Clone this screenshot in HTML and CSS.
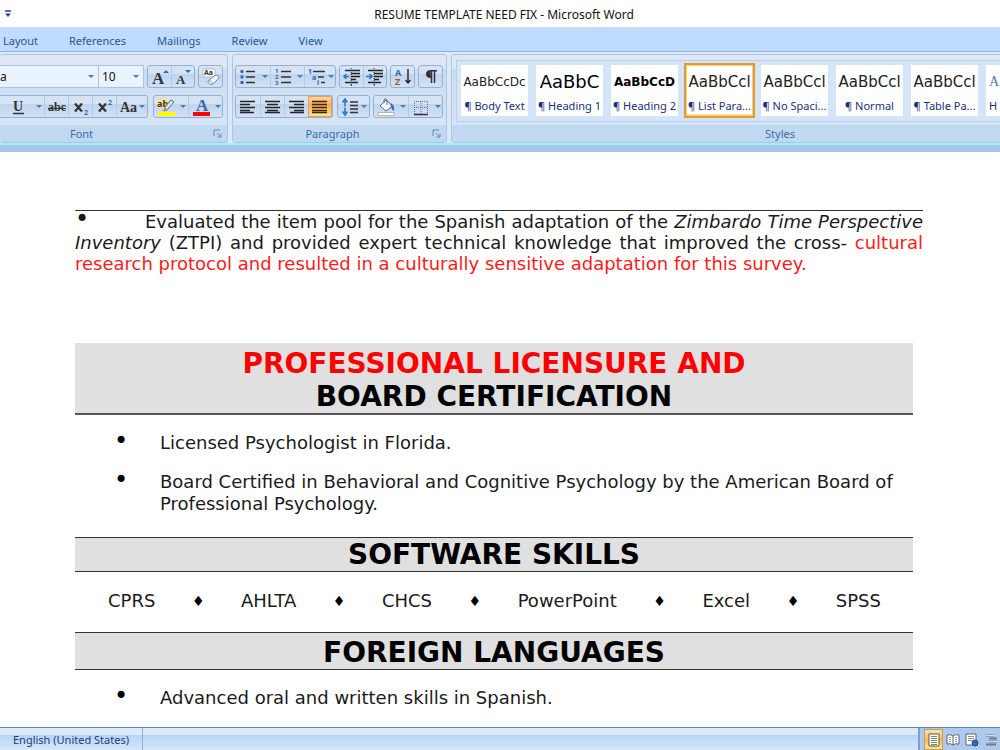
FILE: index.html
```html
<!DOCTYPE html>
<html lang="en">
<head>
<meta charset="utf-8">
<meta name="viewport" content="width=device-width, initial-scale=1">
<title>RESUME TEMPLATE NEED FIX - Microsoft Word</title>
<link rel="stylesheet" href="styles.css">
</head>
<body>

<header class="titlebar">
  <button class="quick" aria-label="Customize Quick Access Toolbar">
    <svg width="8" height="8" viewBox="0 0 8 8"><path d="M1 1h6" stroke="#27408b" stroke-width="1.5"/><path d="M1 3.5h6L4 7z" fill="#27408b"/></svg>
  </button>
  <div class="title">RESUME TEMPLATE NEED FIX - Microsoft Word</div>
</header>

<nav class="tabs">
  <a href="#">Layout</a>
  <a href="#">References</a>
  <a href="#">Mailings</a>
  <a href="#">Review</a>
  <a href="#">View</a>
</nav>

<div class="ribbon">
  <section class="group font-group">
    <div class="tools">
      <div class="tool-row">
        <div class="combos">
          <select class="font-name" aria-label="Font"><option>a</option></select>
          <select class="font-size" aria-label="Font size"><option>10</option></select>
        </div>
        <div class="set">
          <button aria-label="Grow font"><svg width="20" height="20" viewBox="0 0 20 20"><text x="2" y="17" class="serif" font-size="17">A</text><path d="M13 6l3-3 3 3z" fill="#3567ad"/></svg></button>
          <button aria-label="Shrink font"><svg width="20" height="20" viewBox="0 0 20 20"><text x="3" y="17" class="serif" font-size="13">A</text><path d="M12 3h6l-3 3z" fill="#3567ad"/></svg></button>
        </div>
        <div class="set">
          <button aria-label="Clear formatting"><svg width="20" height="20" viewBox="0 0 20 20"><path d="M2 2h12v8H2z" fill="#fff" stroke="#b5bdc9"/><text x="3" y="8" font-size="7" font-weight="bold" fill="#333">Aa</text><path d="M7 14l6-5q5-2 5 2l-6 6q-5 1-5-3z" fill="#f3f5fa" stroke="#75819b"/><path d="M7 14q4-1 5 3" fill="none" stroke="#9ba6bb"/></svg></button>
        </div>
      </div>
      <div class="tool-row">
        <div class="set open">
          <button class="split underline" aria-label="Underline"><svg width="18" height="20" viewBox="0 0 18 20"><text x="3" y="14" class="serif" font-size="14">U</text><path d="M3 16.5h11" stroke="#333" stroke-width="1.5"/></svg><i></i></button>
          <button class="wide" aria-label="Strikethrough"><svg width="20" height="20" viewBox="0 0 20 20"><text x="1" y="14" class="serif" font-size="12">abc</text><path d="M1 11.5h18" stroke="#333"/></svg></button>
          <button class="wide" aria-label="Subscript"><svg width="20" height="20" viewBox="0 0 20 20"><path d="M4 6.500l7 8M11 6.500l-7 8" stroke="#333" stroke-width="2.200"/><text x="13" y="18" font-size="7" font-weight="bold" fill="#2d70b8">2</text></svg></button>
          <button class="wide" aria-label="Superscript"><svg width="20" height="20" viewBox="0 0 20 20"><path d="M4 6.500l7 8M11 6.500l-7 8" stroke="#333" stroke-width="2.200"/><text x="13" y="8" font-size="7" font-weight="bold" fill="#2d70b8">2</text></svg></button>
          <button class="case" aria-label="Change case"><svg width="18" height="20" viewBox="0 0 18 20"><text x="0" y="15" class="serif" font-size="14">Aa</text></svg><i></i></button>
        </div>
        <div class="set">
          <button class="split" aria-label="Text highlight color"><svg width="20" height="20" viewBox="0 0 20 20"><path d="M1 2h11v9H1z" fill="#ffe680"/><text x="1" y="10" font-size="9" font-weight="bold" fill="#333">ab</text><path d="M9 10l6-7 3 2-7 8-3 1z" fill="#dce6f4" stroke="#596c8a"/><path d="M6 14l3-4 3 3z" fill="#d59b4b"/><path d="M2 15h17v4H2z" fill="#ff0"/></svg><i></i></button>
          <button class="split" aria-label="Font color"><svg width="20" height="20" viewBox="0 0 20 20"><text x="5" y="14" class="serif blue" font-size="17">A</text><path d="M2 15h17v4H2z" fill="red"/></svg><i></i></button>
        </div>
      </div>
    </div>
    <div class="group-name"><span>Font</span>
      <button class="launcher" aria-label="Font settings"><svg width="9" height="9" viewBox="0 0 9 9"><path d="M1 7V1h6M4 4l4 4M8 4.500V8H4.500" fill="none" stroke="#6287b8"/></svg></button>
    </div>
  </section>

  <section class="group">
    <div class="tools">
      <div class="tool-row">
        <div class="set">
          <button class="split" aria-label="Bullets"><svg width="20" height="20" viewBox="0 0 20 20"><g fill="#2f68ae"><circle cx="4" cy="4.500" r="1.700"/><circle cx="4" cy="10" r="1.700"/><circle cx="4" cy="15.500" r="1.700"/></g><path d="M8 4.500h9M8 10h9M8 15.500h9" stroke="#333" stroke-width="1.400"/></svg><i></i></button>
          <button class="split" aria-label="Numbering"><svg width="20" height="20" viewBox="0 0 20 20"><g fill="#2f68ae" font-size="6" font-weight="bold"><text x="2" y="6">1</text><text x="2" y="12">2</text><text x="2" y="18">3</text></g><path d="M8 4.500h10M8 10h10M8 15.500h10" stroke="#333" stroke-width="1.400"/></svg><i></i></button>
          <button class="multi" aria-label="Multilevel list"><svg width="20" height="20" viewBox="0 0 20 20"><g fill="#2f68ae" font-size="7" font-weight="bold"><text x="1" y="7">1</text><text x="5" y="13">a</text><text x="10" y="18">i</text></g><path d="M6 4.500h12M11 10h6M14 15.500h4" stroke="#333" stroke-width="1.400"/></svg><i></i></button>
        </div>
        <div class="set">
          <button aria-label="Decrease indent"><svg width="20" height="20" viewBox="0 0 20 20"><path d="M3 3.500h15M9 6.500h9M9 9.500h9M9 12.500h5M3 15.500h13M9 18h1" stroke="#222" stroke-width="1.500"/><path d="M9 1v18" stroke="#333" stroke-dasharray="1 1"/><path d="M7 9.500H2M4.500 7L2 9.500 4.500 12" fill="none" stroke="#2878c4" stroke-width="1.600"/></svg></button>
          <button aria-label="Increase indent"><svg width="20" height="20" viewBox="0 0 20 20"><path d="M3 3.500h15M9 6.500h9M9 9.500h9M9 12.500h5M3 15.500h13M9 18h1" stroke="#222" stroke-width="1.500"/><path d="M9 1v18" stroke="#333" stroke-dasharray="1 1"/><path d="M1 9.500h6M4.500 7L7 9.500 4.500 12" fill="none" stroke="#2878c4" stroke-width="1.600"/></svg></button>
        </div>
        <div class="set">
          <button aria-label="Sort"><svg width="20" height="20" viewBox="0 0 20 20"><text x="2" y="9" font-size="9" font-weight="bold" fill="#376aab">A</text><text x="2" y="18" font-size="9" font-weight="bold" fill="#a65b22">Z</text><path d="M15 2v14M12.500 13l2.500 3 2.500-3" fill="none" stroke="#222" stroke-width="1.400"/></svg></button>
        </div>
        <div class="set">
          <button aria-label="Show paragraph marks"><svg width="20" height="20" viewBox="0 0 20 20"><path d="M10 11Q5 11 5 7t5-4h6v1.500H9.500z" fill="#333"/><path d="M10.500 3v13M13.500 3v13" stroke="#333" stroke-width="1.500"/></svg></button>
        </div>
      </div>
      <div class="tool-row">
        <div class="set">
          <button class="wide" aria-label="Align left"><svg width="20" height="20" viewBox="0 0 20 20"><path d="M2 4.500h15M2 7.500h10M2 10.500h15M2 13.500h10M2 15.500h14" stroke="#222" stroke-width="1.400"/></svg></button>
          <button class="wide" aria-label="Center"><svg width="20" height="20" viewBox="0 0 20 20"><path d="M2 4.500h15M4 7.500h11M2 10.500h15M4 13.500h11M2 15.500h15" stroke="#222" stroke-width="1.400"/></svg></button>
          <button class="wide" aria-label="Align right"><svg width="20" height="20" viewBox="0 0 20 20"><path d="M2 4.500h15M7 7.500h10M2 10.500h15M7 13.500h10M3 15.500h14" stroke="#222" stroke-width="1.400"/></svg></button>
          <button class="wide on" aria-label="Justify" aria-pressed="true"><svg width="20" height="20" viewBox="0 0 20 20"><path d="M2 4.500h15M2 7.500h15M2 10.500h15M2 13.500h15M2 15.500h15" stroke="#3d2409" stroke-width="1.400"/></svg></button>
        </div>
        <div class="set">
          <button class="spacing" aria-label="Line spacing"><svg width="20" height="20" viewBox="0 0 20 20"><path d="M5 2v16M2.500 5.500L5 2l2.500 3.500M2.500 14.500L5 18l2.500-3.500" fill="none" stroke="#2f7fc5" stroke-width="1.700"/><path d="M4 9.500h2v1H4z" fill="#d7e5f6"/><path d="M10 5h8M10 8.500h8M10 12h8M10 15.500h8" stroke="#333" stroke-width="1.300"/></svg><i></i></button>
        </div>
        <div class="set">
          <button class="split" aria-label="Shading"><svg width="20" height="20" viewBox="0 0 20 20"><path d="M4 9l6-6 7 6-7 5z" fill="#f5f8fc" stroke="#50698e"/><path d="M8 6V3q1-3 3 0v5" fill="none" stroke="#50698e"/><path d="M14 6q5 1 4 8-2-1-3-4z" fill="#3a70b4"/><path d="M2 15.500h16v3H2z" fill="#fff" stroke="#b5b5a8"/></svg><i></i></button>
          <button class="split" aria-label="Borders"><svg width="20" height="20" viewBox="0 0 20 20"><path d="M3.500 17V4.500h13V17M10 4v13M3 10.500h14" fill="none" stroke="#65738a" stroke-dasharray="1 1"/><path d="M3 17.500h14" stroke="#333" stroke-width="1.500"/></svg><i></i></button>
        </div>
      </div>
    </div>
    <div class="group-name"><span>Paragraph</span>
      <button class="launcher" aria-label="Paragraph settings"><svg width="9" height="9" viewBox="0 0 9 9"><path d="M1 7V1h6M4 4l4 4M8 4.500V8H4.500" fill="none" stroke="#6287b8"/></svg></button>
    </div>
  </section>

  <section class="group styles-group">
    <div class="gallery">
      <button class="tile"><span class="sample small">AaBbCcDc</span><span>¶ Body Text</span></button>
      <button class="tile"><span class="sample large">AaBbC</span><span>¶ Heading 1</span></button>
      <button class="tile"><span class="sample strong">AaBbCcD</span><span>¶ Heading 2</span></button>
      <button class="tile selected"><span class="sample">AaBbCcl</span><span>¶ List Para...</span></button>
      <button class="tile"><span class="sample">AaBbCcl</span><span>¶ No Spaci...</span></button>
      <button class="tile"><span class="sample">AaBbCcl</span><span>¶ Normal</span></button>
      <button class="tile"><span class="sample">AaBbCcl</span><span>¶ Table Pa...</span></button>
      <button class="tile last"><span class="sample heading">A</span><span>H</span></button>
    </div>
    <div class="group-name"><span>Styles</span></div>
  </section>
</div>

<main class="document">
  <div class="intro">
    <span class="line"><span class="tab">•</span>Evaluated the item pool for the Spanish adaptation of the <em>Zimbardo Time Perspective</em></span>
    <span class="line"><em>Inventory</em> (ZTPI) and provided expert technical knowledge that improved the cross- <span class="red">cultural</span></span>
    <span class="line end red">research protocol and resulted in a culturally sensitive adaptation for this survey.</span>
  </div>

  <h2 class="licensure"><span class="red">PROFESSIONAL LICENSURE AND</span><br>BOARD CERTIFICATION</h2>
  <ul>
    <li>Licensed Psychologist in Florida.</li>
    <li>Board Certified in Behavioral and Cognitive Psychology by the American Board of Professional Psychology.</li>
  </ul>

  <h2 class="ruled software">SOFTWARE SKILLS</h2>
  <div class="skills">
    <span>CPRS</span><b>♦</b><span>AHLTA</span><b>♦</b><span>CHCS</span><b>♦</b><span>PowerPoint</span><b>♦</b><span>Excel</span><b>♦</b><span>SPSS</span>
  </div>

  <h2 class="ruled languages">FOREIGN LANGUAGES</h2>
  <ul>
    <li>Advanced oral and written skills in Spanish.</li>
  </ul>
</main>

<footer class="statusbar">
  <button class="language">English (United States)</button>
  <div class="views">
    <button class="on" aria-label="Print layout"><svg width="16" height="16" viewBox="0 0 16 16"><path d="M3 2h10v12H3z" fill="#fff" stroke="#5d564a"/><path d="M5 4.500h6M5 6.500h6M5 8.500h6M5 10.500h6M5 12.500h6" stroke="#8a806e"/></svg></button>
    <button aria-label="Full screen reading"><svg width="16" height="16" viewBox="0 0 16 16"><path d="M2 3q4-1 6 1 2-2 6-1v9q-4-1-6 1-2-2-6-1zM8 4v9" fill="#fff" stroke="#5c6470"/><path d="M4 5.500h2M4 7.500h2M4 9.500h2M10 5.500h2M10 7.500h2M10 9.500h2" stroke="#8a8f98"/></svg></button>
    <button aria-label="Web layout"><svg width="16" height="16" viewBox="0 0 16 16"><path d="M2 2h10v11H2z" fill="#fff" stroke="#5c6470"/><path d="M4 4.500h6M4 6.500h6M4 8.500h4" stroke="#8a8f98"/><circle cx="11" cy="11" r="3" fill="#2e69bd" stroke="#19468b"/></svg></button>
    <button aria-label="Outline"><svg width="16" height="16" viewBox="0 0 16 16"><path d="M3 3.500h8M6 6.500h8M6 9.500h8M3 12.500h10" stroke="#6f7b8d" stroke-width="2"/><path d="M3 3.500h8M6 9.500h8" stroke="#d5dce6"/></svg></button>
  </div>
</footer>

</body>
</html>
```
FILE: styles.css
```css
*, *:before, *:after {
  box-sizing: border-box;
}

body {
  margin: 0;
  min-height: 100vh;
  display: flex;
  flex-direction: column;
  overflow-x: hidden;
  background: #fff;
  font-family: "Noto Sans", sans-serif;
  font-size: 11px;
}

button, select {
  margin: 0;
  padding: 0;
  border: 0;
  background: none;
  font: inherit;
  color: inherit;
}

svg {
  display: block;
  flex: none;
}

svg text {
  font-family: "Noto Sans", sans-serif;
}

svg .serif {
  font-family: "Liberation Serif", serif;
  font-weight: bold;
  fill: #333;
}

svg .blue {
  fill: #3767ac;
}

.titlebar {
  display: flex;
  align-items: center;
  height: 27px;
  padding: 0 4px;
}

.title {
  flex: 1;
  padding-top: 2px;
  font-size: 12px;
  text-align: center;
  color: #111;
}

.tabs {
  display: flex;
  align-items: center;
  gap: 31px;
  height: 25px;
  padding: 2px 3px 0;
  border-bottom: 1px solid #8db2e3;
  background: #bfdbff;
}

.tabs a {
  color: #2b568f;
  text-decoration: none;
}

/* ribbon */
.ribbon {
  display: flex;
  gap: 4px;
  height: 100px;
  padding: 2px 0 8px;
  overflow: hidden;
  background: linear-gradient(#dce8f6 0 91px, #9ff0f6 91px 93px, #a9c6eb 93px);
}

.group {
  flex: none;
  display: flex;
  flex-direction: column;
  height: 89px;
  border: 1px solid #aac5e5;
  border-radius: 3px;
  background: linear-gradient(#dee8f5 0 14px, #cbdcf0 14px, #d8e8f8);
}

.font-group {
  border-left: 0;
}

.group-name {
  display: flex;
  align-items: center;
  height: 17px;
  background: #c1d8f1;
  color: #3e6aaa;
}

.group-name span {
  flex: 1;
  text-align: center;
}

.font-group .group-name span {
  padding-right: 50px;
}

.launcher {
  width: 9px;
  margin-right: 5px;
}

.tools {
  flex: 1;
  display: flex;
  flex-direction: column;
  gap: 7px;
  padding: 10px 3px 0 2px;
}

.font-group .tools {
  padding: 10px 4px 0 0;
}

.tool-row {
  display: flex;
  justify-content: space-between;
  gap: 3px;
}

.set {
  display: flex;
  height: 23px;
  border: 1px solid #93b1d8;
  border-radius: 3px;
  background: linear-gradient(#d5e3f4 0 40%, #bfd4ed 40%, #d2e2f5);
}

.set.open {
  border-left: 0;
  border-radius: 0 3px 3px 0;
}

.set button {
  display: flex;
  align-items: center;
  justify-content: center;
  width: 23px;
}

.set button + button {
  border-left: 1px solid #b4cae6;
}

.set .split {
  width: 34px;
}

.set .underline {
  width: 44px;
  padding-left: 8px;
}

.set .case, .set .multi, .set .spacing {
  width: 31px;
}

.set .wide {
  width: 24px;
}

.set i {
  margin-left: 4px;
  border: 3px solid transparent;
  border-top-color: #4c79b8;
  border-bottom: 0;
}

.set .underline i {
  margin-left: 8px;
}

.set .case i, .set .multi i, .set .spacing i {
  margin-left: 1px;
}

.set .on {
  border: 1px solid #d9a65c;
  background: linear-gradient(#fdd5a0, #f9ac4c 45%, #fde68c);
}

.combos {
  display: flex;
}

.combos select {
  height: 23px;
  border: 1px solid #a9c3e3;
  border-left: 0;
  background: url("data:image/svg+xml,%3Csvg xmlns='http://www.w3.org/2000/svg' width='6' height='4'%3E%3Cpath d='M0 0h6L3 3z' fill='%234c79b8'/%3E%3C/svg%3E") no-repeat right 4px center #eaf3fd;
  appearance: none;
  font-size: 12px;
  color: #111;
}

.font-name {
  width: 99px;
}

.font-size {
  width: 45px;
  padding-left: 3px;
}

/* styles gallery */
.gallery {
  flex: none;
  display: flex;
  gap: 8px;
  height: 62px;
  margin: 5px 4px 3px;
  padding: 4px 50px 4px 4px;
  border: 1px solid #b9d0ec;
  background: #d4e5f8;
}

.tile {
  flex: none;
  display: flex;
  flex-direction: column;
  justify-content: space-between;
  align-items: center;
  width: 67px;
  height: 51px;
  padding: 6px 0 3px;
  overflow: hidden;
  background: #fff;
  color: #172f7b;
  line-height: 15px;
  white-space: nowrap;
}

.tile.selected {
  outline: 2px solid #e09a3c;
  box-shadow: inset 0 0 0 1px #fbd070, inset 0 -2px #fce388;
}

.tile.last {
  align-items: flex-start;
  padding-left: 3px;
}

.sample {
  font-family: "DejaVu Sans", sans-serif;
  font-size: 15px;
  line-height: 22px;
  color: #222;
}

.sample.small {
  font-size: 12px;
}

.sample.large {
  font-size: 18px;
  color: #000;
}

.sample.strong {
  font-size: 12px;
  font-weight: bold;
  color: #000;
}

.sample.heading {
  font-family: "Liberation Serif", serif;
  font-size: 14px;
  color: #4779b8;
}

/* page */
.document {
  flex: 1;
  padding: 58px 87px 0 75px;
  font-family: "DejaVu Sans", sans-serif;
  font-size: 18px;
  line-height: 22px;
  color: #1a1a1a;
}

.intro {
  margin: 0 -10px 69px 0;
  border-top: 1px solid #333;
  line-height: 21px;
}

.line {
  display: block;
  text-align: justify;
  text-align-last: justify;
  white-space: nowrap;
}

.line.end {
  text-align-last: left;
}

.tab {
  display: inline-block;
  width: 70px;
  font-size: 24px;
  line-height: 16px;
  text-align-last: left;
  vertical-align: top;
}

.red {
  color: #ff1a1a;
}

h2 {
  margin: 0;
  background: #e0e0e0;
  border-bottom: 1px solid #333;
  font-size: 28px;
  line-height: 33px;
  text-align: center;
  color: #000;
}

h2 .red {
  color: #f00;
}

.licensure {
  padding: 4px 0 0;
  border-bottom-width: 2px;
  border-bottom-color: #555;
}

.ruled {
  border-top: 1px solid #333;
}

.languages {
  padding: 3px 0 0;
}

.document ul {
  margin: 0;
  padding: 17px 0 22px 85px;
  list-style: none;
}

.document ul:last-child {
  padding-bottom: 0;
}

.document li + li {
  margin-top: 17px;
}

.document li:before {
  content: "•";
  float: left;
  margin-left: -46px;
  font-size: 24px;
  line-height: 18px;
  color: #000;
}

.skills {
  display: flex;
  justify-content: space-between;
  padding: 18px 32px 20px 33px;
}

.skills b {
  font-size: 14px;
  font-weight: normal;
  color: #000;
}

/* status bar */
.statusbar {
  display: flex;
  justify-content: space-between;
  height: 23px;
  border-top: 1px solid #5b82bd;
  background: linear-gradient(#dbe9fb 0 7px, #b7d3f5 7px, #d7e7fa);
  color: #1d3c7c;
}

.language {
  padding: 0 13px;
  border-right: 1px solid #8eb0dd;
}

.views {
  display: flex;
  padding: 1px 0 0 4px;
  border-left: 2px solid #7f9fcb;
  background: #adc9ec;
}

.views button {
  display: flex;
  align-items: center;
  justify-content: center;
  width: 19px;
}

.views .on {
  border: 1px solid #c69c5b;
  background: linear-gradient(#fde0ae, #fab75c 50%, #fde68c);
}
```
